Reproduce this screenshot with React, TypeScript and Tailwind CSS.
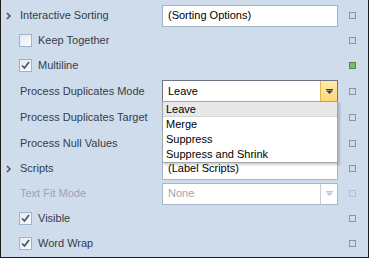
import React from "react";

type Row = {
  label: string;
  kind: "expand" | "check" | "plain";
  checked?: boolean;
  disabled?: boolean;
  value?: "text" | "combo" | "comboOpen" | "comboDisabled";
  text?: string;
  h: string;
  mark?: "green" | "dim";
};

const rows: Row[] = [
  { label: "Interactive Sorting", kind: "expand", value: "text", text: "(Sorting Options)", h: "h-[25px]" },
  { label: "Keep Together", kind: "check", checked: false, h: "h-[25px]" },
  { label: "Multiline", kind: "check", checked: true, h: "h-[25px]", mark: "green" },
  { label: "Process Duplicates Mode", kind: "plain", value: "comboOpen", text: "Leave", h: "h-[26px]" },
  { label: "Process Duplicates Target", kind: "plain", h: "h-[26px]" },
  { label: "Process Null Values", kind: "plain", h: "h-[26px]" },
  { label: "Scripts", kind: "expand", value: "text", text: "(Label Scripts)", h: "h-[25px]" },
  { label: "Text Fit Mode", kind: "plain", disabled: true, value: "comboDisabled", text: "None", h: "h-[25px]", mark: "dim" },
  { label: "Visible", kind: "check", checked: true, h: "h-[25px]" },
  { label: "Word Wrap", kind: "check", checked: true, h: "h-[25px]" },
];

const options = ["Leave", "Merge", "Suppress", "Suppress and Shrink"];

const Chevron = () => (
  <svg className="w-[6px] h-[8px]" viewBox="0 0 6 8" fill="none">
    <path d="M1 1 4 4 1 7" stroke="#4a5466" strokeWidth="1.6" />
  </svg>
);

const CheckBox = ({ checked }: { checked: boolean }) => (
  <span className="w-[13px] h-[13px] border border-[#9fb1cb] bg-gradient-to-br from-[#e6eaef] to-[#fbfbfc] flex items-center justify-center">
    {checked ? (
      <svg className="w-[9px] h-[9px]" viewBox="0 0 9 9" fill="none">
        <path d="M1 4.5 3.5 7 8 1" stroke="#3e5677" strokeWidth="1.7" />
      </svg>
    ) : null}
  </span>
);

const Arrow = ({ color }: { color: string }) => (
  <svg className="w-[7px] h-[5px]" viewBox="0 0 7 5">
    <rect x="0" y="0" width="7" height="1" fill={color} />
    <path d="M0 1.5h7L3.5 5z" fill={color} />
  </svg>
);

const Value = ({ row }: { row: Row }) => {
  if (row.value === "text") {
    return (
      <div className="w-[176px] h-[22px] border border-[#a5b4c8] bg-white flex items-center px-[5px] text-black">
        {row.text}
      </div>
    );
  }
  if (row.value === "comboOpen") {
    return (
      <div className="relative w-[176px] h-[22px]">
        <div className="w-full h-full border border-[#6e7480] bg-white flex">
          <span className="flex-1 flex items-center px-[5px] text-black">{row.text}</span>
          <span className="w-[17px] h-full border-l border-[#e2b95a] bg-gradient-to-b from-[#ffe9a8] to-[#ffd77a] flex items-center justify-center">
            <Arrow color="#3a3f49" />
          </span>
        </div>
        <ul className="absolute left-0 top-[21px] w-[176px] border border-[#a0a4ab] bg-white shadow-[2px_2px_2px_rgba(0,0,0,0.18)] z-10 text-black">
          {options.map((o, idx) => (
            <li
              key={o}
              className={`h-[15px] flex items-center px-[3px] ${idx === 0 ? "bg-[#e8e8e8] border-b border-[#d6d6d6]" : ""}`}
            >
              {o}
            </li>
          ))}
        </ul>
      </div>
    );
  }
  if (row.value === "comboDisabled") {
    return (
      <div className="w-[176px] h-[22px] border border-[#a9b7ca] bg-white flex">
        <span className="flex-1 flex items-center px-[5px] text-[#a0a6ae]">{row.text}</span>
        <span className="w-[17px] h-full border-l border-[#c5ced9] flex items-center justify-center">
          <Arrow color="#c3c7cd" />
        </span>
      </div>
    );
  }
  return <div className="w-[176px]" />;
};

const Mark = ({ kind }: { kind?: "green" | "dim" }) => {
  const cls =
    kind === "green"
      ? "border-[#4d8a3c] bg-[#7cbc64]"
      : kind === "dim"
        ? "border-[#b5c1d0]"
        : "border-[#8a95a4]";
  return <span className={`w-[7px] h-[7px] border ${cls}`} />;
};

export default function App() {
  return (
    <div
      className="w-[369px] h-[258px] bg-[#cfdcec] border-x border-b border-[#1c1c1c] pt-[3px] text-[11px] text-[#343c4a] overflow-hidden"
      style={{ fontFamily: '"Liberation Sans", Arial, sans-serif' }}
    >
      {rows.map((row) => (
        <div key={row.label} className={`${row.h} flex items-center`}>
          <div className="w-[161px] flex items-center shrink-0">
            <span className={`${row.kind === "check" ? "w-[18px]" : "w-[19px]"} pl-[5px] flex items-center`}>
              {row.kind === "expand" ? <Chevron /> : null}
            </span>
            {row.kind === "check" ? (
              <>
                <CheckBox checked={!!row.checked} />
                <span className="ml-[6px]">{row.label}</span>
              </>
            ) : (
              <span className={row.disabled ? "text-[#9ba4b0]" : ""}>{row.label}</span>
            )}
          </div>
          <Value row={row} />
          <div className="flex-1 flex justify-center pr-[2px]">
            <Mark kind={row.mark} />
          </div>
        </div>
      ))}
    </div>
  );
}
